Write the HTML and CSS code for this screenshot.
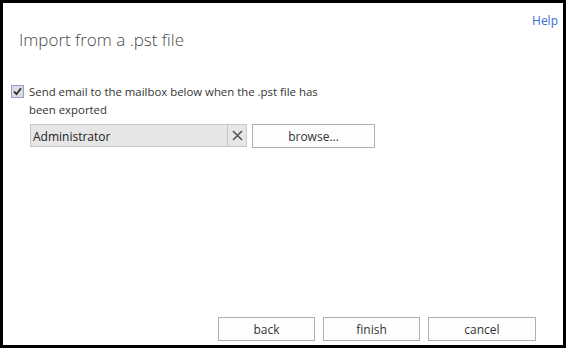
FILE: index.html
```html
<!DOCTYPE html>
<html lang="en">
  <head>
    <meta charset="UTF-8">
    <title>Import from a .pst file</title>
    <link rel="stylesheet" href="styles.css">
  </head>
  <body>
    <div class="dialog">
      <header class="dialog-header">
        <h1 class="dialog-title">Import from a .pst file</h1>
        <a class="help-link" href="#">Help</a>
      </header>

      <div class="dialog-body">
        <label class="check-row">
          <span class="check" role="checkbox" aria-checked="true">
            <svg width="9" height="9" viewBox="0 0 9 9">
              <path d="M1 4.5 L3.5 7.2 L8 1.2" stroke="#2b2b2b" stroke-width="1.8" fill="none"/>
            </svg>
          </span>
          <span>Send email to the mailbox below when the .pst file has been exported</span>
        </label>

        <div class="picker-row">
          <div class="picker">
            <span class="picker-value">Administrator</span>
            <button class="picker-clear" type="button" aria-label="clear">
              <svg width="11" height="11" viewBox="0 0 11 11">
                <path d="M1 1 L10 10 M10 1 L1 10" stroke="#555" stroke-width="1.6" fill="none"/>
              </svg>
            </button>
          </div>
          <button class="btn browse-btn" type="button">browse...</button>
        </div>
      </div>

      <footer class="dialog-footer">
        <button class="btn" type="button">back</button>
        <button class="btn" type="button">finish</button>
        <button class="btn cancel-btn" type="button">cancel</button>
      </footer>
    </div>
  </body>
</html>
```

FILE: styles.css
```css
:root {
  --text-color: #333333;
  --link-color: #3b6fd0;
  --field-bg: #e6e6e6;
  --field-border: #c6c6c6;
  --btn-border: #a9b1b1;
  --btn-bg: #fdfdfd;
}

* {
  margin: 0;
  padding: 0;
  box-sizing: border-box;
}

body {
  font-family: 'Open Sans', 'Noto Sans', sans-serif;
  color: var(--text-color);
  background: #ffffff;
}

.dialog {
  width: 566px;
  height: 348px;
  border: 3px solid #000000;
  display: flex;
  flex-direction: column;
}

.dialog-header {
  display: flex;
  justify-content: space-between;
  align-items: flex-start;
  padding: 9px 5px 0 16px;
}

.dialog-title {
  font-size: 17px;
  font-weight: 300;
  color: #4a4a4a;
  margin-top: 16px;
}

.help-link {
  font-size: 12px;
  color: var(--link-color);
  text-decoration: none;
}

.dialog-body {
  flex: 1;
  padding: 32px 0 0 8px;
}

.check-row {
  display: flex;
  align-items: flex-start;
  gap: 5px;
  width: 320px;
  font-size: 11.4px;
  line-height: 18px;
}

.check {
  flex: none;
  width: 13px;
  height: 13px;
  margin-top: 2px;
  border: 1px solid #8e9fd6;
  background: #dcdcdc;
  display: flex;
  align-items: center;
  justify-content: center;
}

.picker-row {
  display: flex;
  gap: 5px;
  margin: 5px 0 0 19px;
}

.picker {
  display: flex;
  width: 217px;
  height: 23px;
  background: var(--field-bg);
  border: 1px solid var(--field-border);
}

.picker-value {
  flex: 1;
  font-size: 12px;
  line-height: 23px;
  padding-left: 2px;
  color: #222222;
}

.picker-clear {
  width: 19px;
  border: none;
  border-left: 1px solid var(--field-border);
  background: var(--field-bg);
  display: flex;
  align-items: center;
  justify-content: center;
}

.btn {
  font-family: 'Open Sans', 'Noto Sans', sans-serif;
  font-size: 12px;
  color: var(--text-color);
  background: var(--btn-bg);
  border: 1px solid var(--btn-border);
  width: 97px;
  height: 24px;
}

.browse-btn {
  width: 123px;
}

.dialog-footer {
  display: flex;
  justify-content: flex-end;
  gap: 8px;
  padding: 0 27px 4px 0;
}

.cancel-btn {
  width: 108px;
}
```
